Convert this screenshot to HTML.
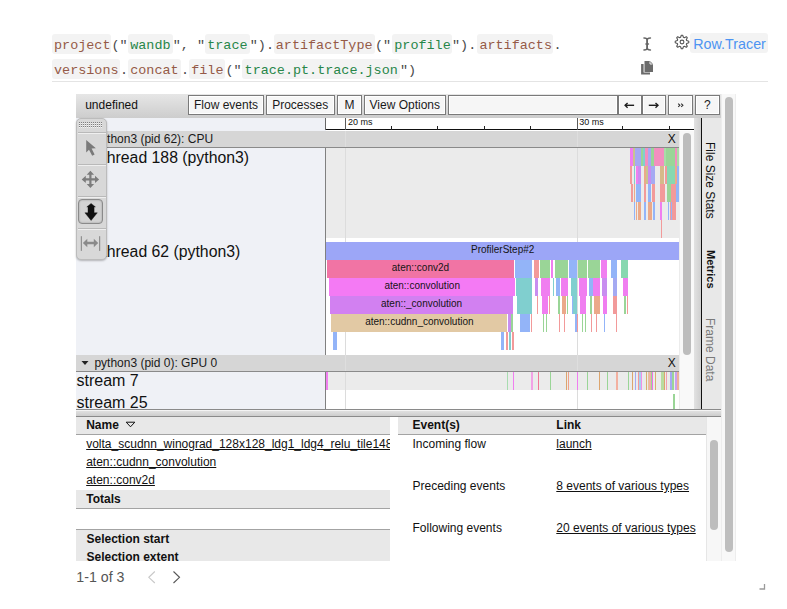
<!DOCTYPE html><html><head><meta charset="utf-8"><style>
*{box-sizing:border-box;margin:0;padding:0}
html,body{width:787px;height:609px;overflow:hidden;background:#fff;position:relative;font-family:"Liberation Sans",sans-serif}
div{position:absolute}
.bx{background:#f3f3f3;border-radius:3px}
.tk{font-family:"Liberation Mono",monospace;font-size:13.45px;line-height:20px;white-space:pre}
.id{color:#955a47}
.st{color:#278649}
.pu{color:#4a4a4a}
.btn{top:95px;height:20px;border:1px solid #7a7a7a;background:#f6f6f6;box-shadow:inset 0 0 0 1px #fff;font-size:12px;line-height:18px;text-align:center;color:#1a1a1a}
.t{white-space:pre}
.s12{font-size:12px;line-height:14px}
.s16{font-size:16px;line-height:18px;color:#111}
.lab{font-size:10px;line-height:12px;color:#141414;white-space:pre;text-align:center;overflow:hidden}
.lnk{text-decoration:underline;color:#111}
</style></head><body>
<div style="left:52px;top:34px;width:59.3px;height:19.5px;background:#f3f3f3;border-radius:3px"></div>
<div style="left:128px;top:34px;width:44.7px;height:19.5px;background:#f3f3f3;border-radius:3px"></div>
<div style="left:205px;top:34px;width:44.7px;height:19.5px;background:#f3f3f3;border-radius:3px"></div>
<div style="left:273.6px;top:34px;width:101.2px;height:19.5px;background:#f3f3f3;border-radius:3px"></div>
<div style="left:392.1px;top:34px;width:59.7px;height:19.5px;background:#f3f3f3;border-radius:3px"></div>
<div style="left:477.2px;top:34px;width:76.2px;height:19.5px;background:#f3f3f3;border-radius:3px"></div>
<div style="left:52px;top:59px;width:67.9px;height:19.5px;background:#f3f3f3;border-radius:3px"></div>
<div style="left:128px;top:59px;width:52.9px;height:19.5px;background:#f3f3f3;border-radius:3px"></div>
<div style="left:189px;top:59px;width:36.4px;height:19.5px;background:#f3f3f3;border-radius:3px"></div>
<div style="left:242.4px;top:59px;width:157.5px;height:19.5px;background:#f3f3f3;border-radius:3px"></div>
<div class="tk id" style="left:54px;top:35.5px">project</div>
<div class="tk pu" style="left:111.5px;top:35.5px">("</div>
<div class="tk st" style="left:130.2px;top:35.5px">wandb</div>
<div class="tk pu" style="left:172.8px;top:35.5px">", "</div>
<div class="tk st" style="left:207.2px;top:35.5px">trace</div>
<div class="tk pu" style="left:249.8px;top:35.5px">").</div>
<div class="tk id" style="left:275.8px;top:35.5px">artifactType</div>
<div class="tk pu" style="left:375px;top:35.5px">("</div>
<div class="tk st" style="left:394.3px;top:35.5px">profile</div>
<div class="tk pu" style="left:452px;top:35.5px">").</div>
<div class="tk id" style="left:479.4px;top:35.5px">artifacts</div>
<div class="tk pu" style="left:553.5px;top:35.5px">.</div>
<div class="tk id" style="left:54px;top:60.5px">versions</div>
<div class="tk pu" style="left:120px;top:60.5px">.</div>
<div class="tk id" style="left:130.2px;top:60.5px">concat</div>
<div class="tk pu" style="left:181px;top:60.5px">.</div>
<div class="tk id" style="left:191.2px;top:60.5px">file</div>
<div class="tk pu" style="left:225.5px;top:60.5px">("</div>
<div class="tk st" style="left:244.6px;top:60.5px">trace.pt.trace.json</div>
<div class="tk pu" style="left:400px;top:60.5px">")</div>
<div style="left:52px;top:81px;width:716px;height:1px;background:#e4e4e4;"></div>
<svg style="position:absolute;left:640px;top:34px" width="16" height="20" viewBox="0 0 16 20">
<g fill="none" stroke="#666" stroke-width="1.6" stroke-linecap="round">
<path d="M4 4 Q7.2 4 7.2 6 L7.2 14 Q7.2 16 4 16"/><path d="M10.4 4 Q7.2 4 7.2 6 L7.2 14 Q7.2 16 10.4 16"/>
<path d="M6 10 L8.4 10"/></g></svg>
<svg style="position:absolute;left:640px;top:60px" width="14" height="16" viewBox="0 0 14 16">
<path d="M1.1 4 H3.6 V12.4 H10 V14.6 H1.1 Z" fill="#6b6b6b"/>
<path d="M4.5 1 H10 L13 4 V12 H4.5 Z" fill="#6b6b6b"/><path d="M10 1.4 V4 H12.6" fill="none" stroke="#fff" stroke-width="0.9"/>
</svg>
<svg style="position:absolute;left:666px;top:26px" width="32" height="32" viewBox="0 0 32 32">
<polygon points="15.33,9.23 16.67,9.23 17.42,11.31 18.31,11.68 20.31,10.74 21.26,11.69 20.32,13.69 20.69,14.58 22.77,15.33 22.77,16.67 20.69,17.42 20.32,18.31 21.26,20.31 20.31,21.26 18.31,20.32 17.42,20.69 16.67,22.77 15.33,22.77 14.58,20.69 13.69,20.32 11.69,21.26 10.74,20.31 11.68,18.31 11.31,17.42 9.23,16.67 9.23,15.33 11.31,14.58 11.68,13.69 10.74,11.69 11.69,10.74 13.69,11.68 14.58,11.31" fill="#fff" stroke="#555" stroke-width="1.1" stroke-linejoin="round"/>
<circle cx="16" cy="16" r="1.9" fill="none" stroke="#555" stroke-width="1.1"/></svg>
<div style="left:690px;top:33px;width:77.6px;height:19.6px;background:#f3f3f3;border-radius:3px"></div>
<div class="t " style="left:693.3px;top:36px;font-size:14.3px;line-height:16px;color:#4d94f2">Row.Tracer</div>
<div style="left:721px;top:94px;width:15px;height:467px;background:#f8f8f8;border-left:1px solid #ededed;border-right:1px solid #ededed"></div>
<div style="left:725px;top:97px;width:8px;height:454.5px;background:#bebebe;border-radius:4px"></div>
<div style="left:76px;top:94px;width:645px;height:23.6px;background:linear-gradient(#e6e6e6,#cdcdcd);"></div>
<div class="t " style="left:85.2px;top:98px;font-size:12px;line-height:14px;color:#111">undefined</div>
<div class="btn" style="left:188px;width:76px">Flow events</div>
<div class="btn" style="left:265.6px;width:69.1px">Processes</div>
<div class="btn" style="left:337.4px;width:24.3px">M</div>
<div class="btn" style="left:363.8px;width:81.9px">View Options</div>
<div class="btn" style="left:448.1px;width:169.7px"></div>
<div class="btn" style="left:617.6px;width:24.0px"></div>
<div class="btn" style="left:641.6px;width:24.1px"></div>
<div class="btn" style="left:668.2px;width:24.7px"></div>
<div class="btn" style="left:695.2px;width:24.5px">?</div>
<svg style="position:absolute;left:618px;top:95px" width="77" height="20" viewBox="0 0 77 20"><g fill="none" stroke="#1e1e1e" stroke-width="1.4" stroke-linecap="butt" stroke-linejoin="miter">
<path d="M7 10.3 L16.1 10.3"/><path d="M9.6 7.9 L7.1 10.3 L9.6 12.7"/>
<path d="M30.8 10.3 L40 10.3"/><path d="M37.5 7.9 L40 10.3 L37.5 12.7"/>
</g><g fill="none" stroke="#333" stroke-width="1.1"><path d="M60.2 8.7 L61.9 10.3 L60.2 11.9"/><path d="M63.2 8.7 L64.9 10.3 L63.2 11.9"/></g></svg>
<div style="left:76px;top:117.6px;width:249.5px;height:291.4px;background:#eff1f6;"></div>
<div style="left:325.5px;top:117.6px;width:368.5px;height:12.9px;background:#fff;"></div>
<div style="left:325px;top:117.6px;width:1px;height:12.9px;background:#666;"></div>
<div style="left:325.5px;top:129px;width:368.5px;height:1.2px;background:#111;"></div>
<div style="left:391.0px;top:126px;width:1.0px;height:3.5px;background:#222;"></div>
<div style="left:437.2px;top:126px;width:1.0px;height:3.5px;background:#222;"></div>
<div style="left:483.6px;top:126px;width:1.0px;height:3.5px;background:#222;"></div>
<div style="left:529.9px;top:126px;width:1.0px;height:3.5px;background:#222;"></div>
<div style="left:622.3px;top:126px;width:1.0px;height:3.5px;background:#222;"></div>
<div style="left:668.8px;top:126px;width:1.0px;height:3.5px;background:#222;"></div>
<div style="left:344.85px;top:118px;width:1.5px;height:11.5px;background:#5a5a5a;"></div>
<div style="left:576.65px;top:118px;width:1.5px;height:11.5px;background:#5a5a5a;"></div>
<div class="t " style="left:348px;top:117px;font-size:9px;line-height:10px;color:#111">20 ms</div>
<div class="t " style="left:579.2px;top:117px;font-size:9px;line-height:10px;color:#111">30 ms</div>
<div style="left:76px;top:131px;width:603.2px;height:17px;background:#d6d6d6;border-bottom:1px solid #8a8a8a"></div>
<div style="left:344.85px;top:131px;width:1.5px;height:16px;background:#dedede;"></div>
<div style="left:576.65px;top:131px;width:1.5px;height:16px;background:#dedede;"></div>
<div class="t " style="left:94.4px;top:132px;font-size:12px;line-height:14px;color:#1a1a1a">python3 (pid 62): CPU</div>
<div class="t " style="left:667.8px;top:132px;font-size:12px;line-height:14px;color:#111">X</div>
<div style="left:325.5px;top:148px;width:353.7px;height:90px;background:#ebebeb;"></div>
<div style="left:325.5px;top:238px;width:353.7px;height:117px;background:#fff;"></div>
<div style="left:325px;top:148px;width:1px;height:207px;background:#808080;"></div>
<div style="left:344.85px;top:148px;width:1.5px;height:207px;background:#dcdcdc;"></div>
<div style="left:576.65px;top:148px;width:1.5px;height:207px;background:#dcdcdc;"></div>
<div class="t " style="left:102.4px;top:149px;font-size:15.8px;line-height:17px;color:#111">thread 188 (python3)</div>
<div class="t " style="left:102.4px;top:243px;font-size:15.8px;line-height:17px;color:#111">thread 62 (python3)</div>
<div style="left:76px;top:355px;width:603.2px;height:17px;background:#d6d6d6;border-bottom:1px solid #8a8a8a"></div>
<div style="left:344.85px;top:355px;width:1.5px;height:16px;background:#dedede;"></div>
<div style="left:576.65px;top:355px;width:1.5px;height:16px;background:#dedede;"></div>
<div class="t " style="left:94.4px;top:356px;font-size:12px;line-height:14px;color:#1a1a1a">python3 (pid 0): GPU 0</div>
<svg style="position:absolute;left:81px;top:360px" width="8" height="6" viewBox="0 0 8 6"><path d="M0.5 1 L7.5 1 L4 5 Z" fill="#222"/></svg>
<div class="t " style="left:667.8px;top:356px;font-size:12px;line-height:14px;color:#111">X</div>
<div style="left:325.5px;top:372px;width:353.7px;height:17.7px;background:#ebebeb;"></div>
<div style="left:325.5px;top:389.7px;width:353.7px;height:19.3px;background:#fff;"></div>
<div style="left:325px;top:372px;width:1px;height:37px;background:#808080;"></div>
<div style="left:344.85px;top:372px;width:1.5px;height:37px;background:#dcdcdc;"></div>
<div style="left:576.65px;top:372px;width:1.5px;height:37px;background:#dcdcdc;"></div>
<div class="t " style="left:76.5px;top:372px;font-size:16px;line-height:17px;color:#111">stream 7</div>
<div class="t " style="left:76.5px;top:394px;font-size:16px;line-height:17px;color:#111">stream 25</div>
<div style="left:679.2px;top:131px;width:14.8px;height:278px;background:#f9f9f9;border-left:1px solid #ececec"></div>
<div style="left:683.3px;top:132.8px;width:7.6px;height:222.5px;background:#bdbdbd;border-radius:4px"></div>
<div style="left:694px;top:117.6px;width:7px;height:291.4px;background:linear-gradient(90deg,#e2e2e2,#cfcfcf);"></div>
<div style="left:701px;top:117.6px;width:1.3px;height:291.4px;background:#111;"></div>
<div style="left:702.3px;top:117.6px;width:18.7px;height:291.4px;background:#e8e8e8;"></div>
<div class="t" style="left:703px;top:142.4px;font-size:12px;line-height:14px;color:#111;transform-origin:0 0;transform:translate(14px,0) rotate(90deg)">File Size Stats</div>
<div class="t" style="left:703.5px;top:249.6px;font-size:11px;line-height:14px;font-weight:bold;color:#111;transform-origin:0 0;transform:translate(14px,0) rotate(90deg)">Metrics</div>
<div class="t" style="left:703px;top:317.6px;font-size:12px;line-height:14px;color:#7a7a7a;transform-origin:0 0;transform:translate(14px,0) rotate(90deg)">Frame Data</div>
<div style="left:76.3px;top:118px;width:30.3px;height:142px;background:#d8d8d8;border:1px solid #bcbcbc;border-radius:5px;box-shadow:0 1px 2px rgba(0,0,0,.25)"></div>
<svg style="position:absolute;left:79px;top:122px" width="24" height="6" viewBox="0 0 24 6"><rect x="0" y="0" width="1" height="1" fill="#7e7e7e"/><rect x="0" y="1" width="1" height="1" fill="#f2f2f2"/><rect x="0" y="2" width="1" height="1" fill="#7e7e7e"/><rect x="0" y="3" width="1" height="1" fill="#f2f2f2"/><rect x="0" y="4" width="1" height="1" fill="#7e7e7e"/><rect x="0" y="5" width="1" height="1" fill="#f2f2f2"/><rect x="2" y="0" width="1" height="1" fill="#7e7e7e"/><rect x="2" y="1" width="1" height="1" fill="#f2f2f2"/><rect x="2" y="2" width="1" height="1" fill="#7e7e7e"/><rect x="2" y="3" width="1" height="1" fill="#f2f2f2"/><rect x="2" y="4" width="1" height="1" fill="#7e7e7e"/><rect x="2" y="5" width="1" height="1" fill="#f2f2f2"/><rect x="4" y="0" width="1" height="1" fill="#7e7e7e"/><rect x="4" y="1" width="1" height="1" fill="#f2f2f2"/><rect x="4" y="2" width="1" height="1" fill="#7e7e7e"/><rect x="4" y="3" width="1" height="1" fill="#f2f2f2"/><rect x="4" y="4" width="1" height="1" fill="#7e7e7e"/><rect x="4" y="5" width="1" height="1" fill="#f2f2f2"/><rect x="6" y="0" width="1" height="1" fill="#7e7e7e"/><rect x="6" y="1" width="1" height="1" fill="#f2f2f2"/><rect x="6" y="2" width="1" height="1" fill="#7e7e7e"/><rect x="6" y="3" width="1" height="1" fill="#f2f2f2"/><rect x="6" y="4" width="1" height="1" fill="#7e7e7e"/><rect x="6" y="5" width="1" height="1" fill="#f2f2f2"/><rect x="8" y="0" width="1" height="1" fill="#7e7e7e"/><rect x="8" y="1" width="1" height="1" fill="#f2f2f2"/><rect x="8" y="2" width="1" height="1" fill="#7e7e7e"/><rect x="8" y="3" width="1" height="1" fill="#f2f2f2"/><rect x="8" y="4" width="1" height="1" fill="#7e7e7e"/><rect x="8" y="5" width="1" height="1" fill="#f2f2f2"/><rect x="10" y="0" width="1" height="1" fill="#7e7e7e"/><rect x="10" y="1" width="1" height="1" fill="#f2f2f2"/><rect x="10" y="2" width="1" height="1" fill="#7e7e7e"/><rect x="10" y="3" width="1" height="1" fill="#f2f2f2"/><rect x="10" y="4" width="1" height="1" fill="#7e7e7e"/><rect x="10" y="5" width="1" height="1" fill="#f2f2f2"/><rect x="12" y="0" width="1" height="1" fill="#7e7e7e"/><rect x="12" y="1" width="1" height="1" fill="#f2f2f2"/><rect x="12" y="2" width="1" height="1" fill="#7e7e7e"/><rect x="12" y="3" width="1" height="1" fill="#f2f2f2"/><rect x="12" y="4" width="1" height="1" fill="#7e7e7e"/><rect x="12" y="5" width="1" height="1" fill="#f2f2f2"/><rect x="14" y="0" width="1" height="1" fill="#7e7e7e"/><rect x="14" y="1" width="1" height="1" fill="#f2f2f2"/><rect x="14" y="2" width="1" height="1" fill="#7e7e7e"/><rect x="14" y="3" width="1" height="1" fill="#f2f2f2"/><rect x="14" y="4" width="1" height="1" fill="#7e7e7e"/><rect x="14" y="5" width="1" height="1" fill="#f2f2f2"/><rect x="16" y="0" width="1" height="1" fill="#7e7e7e"/><rect x="16" y="1" width="1" height="1" fill="#f2f2f2"/><rect x="16" y="2" width="1" height="1" fill="#7e7e7e"/><rect x="16" y="3" width="1" height="1" fill="#f2f2f2"/><rect x="16" y="4" width="1" height="1" fill="#7e7e7e"/><rect x="16" y="5" width="1" height="1" fill="#f2f2f2"/><rect x="18" y="0" width="1" height="1" fill="#7e7e7e"/><rect x="18" y="1" width="1" height="1" fill="#f2f2f2"/><rect x="18" y="2" width="1" height="1" fill="#7e7e7e"/><rect x="18" y="3" width="1" height="1" fill="#f2f2f2"/><rect x="18" y="4" width="1" height="1" fill="#7e7e7e"/><rect x="18" y="5" width="1" height="1" fill="#f2f2f2"/><rect x="20" y="0" width="1" height="1" fill="#7e7e7e"/><rect x="20" y="1" width="1" height="1" fill="#f2f2f2"/><rect x="20" y="2" width="1" height="1" fill="#7e7e7e"/><rect x="20" y="3" width="1" height="1" fill="#f2f2f2"/><rect x="20" y="4" width="1" height="1" fill="#7e7e7e"/><rect x="20" y="5" width="1" height="1" fill="#f2f2f2"/><rect x="22" y="0" width="1" height="1" fill="#7e7e7e"/><rect x="22" y="1" width="1" height="1" fill="#f2f2f2"/><rect x="22" y="2" width="1" height="1" fill="#7e7e7e"/><rect x="22" y="3" width="1" height="1" fill="#f2f2f2"/><rect x="22" y="4" width="1" height="1" fill="#7e7e7e"/><rect x="22" y="5" width="1" height="1" fill="#f2f2f2"/></svg>
<div style="left:77.5px;top:132px;width:28.0px;height:1px;background:#b9b9b9;box-shadow:0 1px 0 #efefef"></div>
<div style="left:77.5px;top:164px;width:28.0px;height:1px;background:#b9b9b9;box-shadow:0 1px 0 #efefef"></div>
<div style="left:77.5px;top:196px;width:28.0px;height:1px;background:#b9b9b9;box-shadow:0 1px 0 #efefef"></div>
<div style="left:77.5px;top:228px;width:28.0px;height:1px;background:#b9b9b9;box-shadow:0 1px 0 #efefef"></div>
<svg style="position:absolute;left:84px;top:139px" width="14" height="18" viewBox="0 0 14 18"><path d="M2.2 1 L2.2 13.6 L5 10.8 L8.2 16.8 L10.6 15.6 L7.6 9.6 L11.9 9.2 Z" fill="#7a7a7a"/></svg>
<svg style="position:absolute;left:80px;top:169px" width="21" height="21" viewBox="0 0 21 21"><path fill="#7c7c7c" d="M10.4 1.7 L14.1 5.8 L11.5 5.8 L11.5 9.3 L15 9.3 L15 6.7 L19.1 10.4 L15 14.1 L15 11.5 L11.5 11.5 L11.5 15 L14.1 15 L10.4 19.1 L6.7 15 L9.3 15 L9.3 11.5 L5.8 11.5 L5.8 14.1 L1.7 10.4 L5.8 6.7 L5.8 9.3 L9.3 9.3 L9.3 5.8 L6.7 5.8 Z"/></svg>
<div style="left:78.2px;top:199px;width:24.8px;height:24.5px;background:#d3d3d3;border:1px solid #8a8a8a;border-radius:4px;box-shadow:inset 0 0 2px rgba(0,0,0,.3)"></div>
<svg style="position:absolute;left:76px;top:196px" width="30" height="30" viewBox="0 0 30 30"><path d="M15.1 7.4 L19.4 10.9 L18.1 10.9 L18.1 16.8 L21.3 16.8 L15.1 24.5 L8.9 16.8 L12 16.8 L12 10.9 L10.8 10.9 Z" fill="#111" stroke="#111" stroke-width="0.4" stroke-linejoin="round"/></svg>
<svg style="position:absolute;left:80px;top:234px" width="22" height="19" viewBox="0 0 22 19"><g fill="#8a8a8a">
<rect x="0.8" y="2.2" width="1.1" height="14.7"/><rect x="19.1" y="2.2" width="1.1" height="14.7"/>
<path d="M2.9 9.05 L7.3 4.8 L7.3 7.75 L13.8 7.75 L13.8 4.8 L18.2 9.05 L13.8 13.3 L13.8 10.35 L7.3 10.35 L7.3 13.3 Z"/></g></svg>
<div style="left:76px;top:409px;width:645px;height:8px;background:linear-gradient(#e4e4e4,#cdcdcd);border-top:1px solid #8a8a8a;border-bottom:1px solid #8a8a8a;box-shadow:inset 0 1px 0 #f4f4f4"></div>
<div style="left:76px;top:417px;width:630.3px;height:144px;background:#fff;"></div>
<div style="left:76px;top:417px;width:314.2px;height:18px;background:#e8e8e8;border-bottom:1px solid #a3a3a3"></div>
<div class="t " style="left:86.2px;top:418px;font-size:12px;line-height:14px;color:#111"><b>Name</b></div>
<svg style="position:absolute;left:125px;top:421px" width="11" height="7" viewBox="0 0 11 7"><path d="M1.2 1.2 L9.8 1.2 L5.5 5.8 Z" fill="none" stroke="#111" stroke-width="1"/></svg>
<div style="left:76px;top:434px;width:314.2px;height:20px;overflow:hidden">
<div class="t " style="left:10.2px;top:3px;font-size:12px;line-height:14px;"><span class="lnk">volta_scudnn_winograd_128x128_ldg1_ldg4_relu_tile148n_nt_v1</span></div>
</div>
<div class="t " style="left:86.2px;top:455px;font-size:12px;line-height:14px;"><span class="lnk">aten::cudnn_convolution</span></div>
<div class="t " style="left:86.2px;top:473px;font-size:12px;line-height:14px;"><span class="lnk">aten::conv2d</span></div>
<div style="left:76px;top:490px;width:314.2px;height:18.5px;background:#e8e8e8;border-bottom:1px solid #a3a3a3"></div>
<div class="t " style="left:86.2px;top:492px;font-size:12px;line-height:14px;color:#111"><b>Totals</b></div>
<div style="left:76px;top:529.2px;width:314.2px;height:31.8px;background:#e8e8e8;border-top:1px solid #a3a3a3"></div>
<div class="t " style="left:86.5px;top:532px;font-size:12px;line-height:14px;color:#111"><b>Selection start</b></div>
<div style="left:76px;top:545px;width:314.2px;height:16px;overflow:hidden">
<div class="t " style="left:10.5px;top:5px;font-size:12px;line-height:14px;color:#111"><b>Selection extent</b></div>
</div>
<div style="left:398px;top:417px;width:308.3px;height:18px;background:#e8e8e8;border-bottom:1px solid #a3a3a3"></div>
<div class="t " style="left:412.5px;top:418px;font-size:12px;line-height:14px;color:#111"><b>Event(s)</b></div>
<div class="t " style="left:556.3px;top:418px;font-size:12px;line-height:14px;color:#111"><b>Link</b></div>
<div class="t " style="left:412.5px;top:437px;font-size:12px;line-height:14px;color:#111">Incoming flow</div>
<div class="t " style="left:556.3px;top:437px;font-size:12px;line-height:14px;"><span class="lnk">launch</span></div>
<div class="t " style="left:412.5px;top:479px;font-size:12px;line-height:14px;color:#111">Preceding events</div>
<div class="t " style="left:556.3px;top:479px;font-size:12px;line-height:14px;"><span class="lnk">8 events of various types</span></div>
<div class="t " style="left:412.5px;top:521px;font-size:12px;line-height:14px;color:#111">Following events</div>
<div class="t " style="left:556.3px;top:521px;font-size:12px;line-height:14px;"><span class="lnk">20 events of various types</span></div>
<div style="left:706.3px;top:417px;width:14.5px;height:144px;background:#f7f7f7;border-left:1px solid #e6e6e6"></div>
<div style="left:710.1px;top:439.6px;width:8.0px;height:90.2px;background:#bdbdbd;border-radius:4px"></div>
<div class="t " style="left:76.3px;top:569px;font-size:14.2px;line-height:16px;color:#555">1-1 of 3</div>
<svg style="position:absolute;left:146px;top:570px" width="40" height="15" viewBox="0 0 40 15"><path d="M8.8 1.5 L2.8 7.3 L8.8 13" fill="none" stroke="#c8c8c8" stroke-width="1.1"/><path d="M27.5 1.5 L33.5 7.3 L27.5 13" fill="none" stroke="#555" stroke-width="1.1"/></svg>
<svg style="position:absolute;left:758px;top:583px" width="8" height="8" viewBox="0 0 8 8"><path d="M1.5 6 L6.5 6 L6.5 1" fill="none" stroke="#9a9a9a" stroke-width="1.3"/></svg>
<div style="left:326.2px;top:242.2px;width:353.0px;height:17.8px;background:#9ca6f7"></div>
<div class="lab" style="left:326.2px;top:244.2px;width:353.0px">ProfilerStep#2</div>
<div style="left:327.3px;top:260.0px;width:186.3px;height:17.9px;background:#f174a4"></div>
<div style="left:515.1px;top:260.0px;width:17.0px;height:17.9px;background:#93b4f8"></div>
<div style="left:533.6px;top:260.0px;width:5.1px;height:17.9px;background:#f29a9a"></div>
<div style="left:540px;top:260.0px;width:10px;height:17.9px;background:#9ad597"></div>
<div style="left:551px;top:260.0px;width:2.4px;height:17.9px;background:#f07ef0"></div>
<div style="left:554.7px;top:260.0px;width:13.6px;height:17.9px;background:#9ad597"></div>
<div style="left:569.4px;top:260.0px;width:7.6px;height:17.9px;background:#93b4f8"></div>
<div style="left:577.9px;top:260.0px;width:9.1px;height:17.9px;background:#9ad597"></div>
<div style="left:587.9px;top:260.0px;width:11.9px;height:17.9px;background:#9ad597"></div>
<div style="left:600.6px;top:260.0px;width:6.8px;height:17.9px;background:#f07ef0"></div>
<div style="left:611.1px;top:260.0px;width:5.7px;height:17.9px;background:#93b4f8"></div>
<div style="left:621px;top:260.0px;width:6.9px;height:17.9px;background:#88d8b0"></div>
<div class="lab" style="left:327.3px;top:262.0px;width:186.3px">aten::conv2d</div>
<div style="left:328.9px;top:277.9px;width:186.6px;height:17.9px;background:#f47af4"></div>
<div style="left:516px;top:277.9px;width:16px;height:17.9px;background:#80cfcf"></div>
<div style="left:535px;top:277.9px;width:2.7px;height:17.9px;background:#c88ef0"></div>
<div style="left:541.1px;top:277.9px;width:8.9px;height:17.9px;background:#f07ef0"></div>
<div style="left:552.5px;top:277.9px;width:1.0px;height:17.9px;background:#80cfcf"></div>
<div style="left:556.2px;top:277.9px;width:3.8px;height:17.9px;background:#93b4f8"></div>
<div style="left:560.8px;top:277.9px;width:7.2px;height:17.9px;background:#f07ef0"></div>
<div style="left:570.8px;top:277.9px;width:6.2px;height:17.9px;background:#80cfcf"></div>
<div style="left:579px;top:277.9px;width:8px;height:17.9px;background:#f07ef0"></div>
<div style="left:588.9px;top:277.9px;width:3.7px;height:17.9px;background:#93b4f8"></div>
<div style="left:592.6px;top:277.9px;width:7.2px;height:17.9px;background:#f07ef0"></div>
<div style="left:602px;top:277.9px;width:5.4px;height:17.9px;background:#c88ef0"></div>
<div style="left:612.5px;top:277.9px;width:4.3px;height:17.9px;background:#a5aaf2"></div>
<div style="left:622.8px;top:277.9px;width:5.1px;height:17.9px;background:#f07ef0"></div>
<div class="lab" style="left:328.9px;top:279.9px;width:186.6px">aten::convolution</div>
<div style="left:330px;top:295.8px;width:183.2px;height:17.9px;background:#d280f1"></div>
<div style="left:517.4px;top:295.8px;width:14.6px;height:17.9px;background:#80cfcf"></div>
<div style="left:536.5px;top:295.8px;width:1.5px;height:17.9px;background:#f29a9a"></div>
<div style="left:541.9px;top:295.8px;width:6.2px;height:17.9px;background:#f07ef0"></div>
<div style="left:548.5px;top:295.8px;width:1.0px;height:17.9px;background:#f29a9a"></div>
<div style="left:557.5px;top:295.8px;width:2.5px;height:17.9px;background:#9ad597"></div>
<div style="left:562.3px;top:295.8px;width:3.7px;height:17.9px;background:#eba98a"></div>
<div style="left:566.5px;top:295.8px;width:1.0px;height:17.9px;background:#9ad597"></div>
<div style="left:571.5px;top:295.8px;width:1.5px;height:17.9px;background:#93b4f8"></div>
<div style="left:573px;top:295.8px;width:4px;height:17.9px;background:#80cfcf"></div>
<div style="left:580.4px;top:295.8px;width:5.6px;height:17.9px;background:#f07ef0"></div>
<div style="left:589.8px;top:295.8px;width:2.2px;height:17.9px;background:#9ad597"></div>
<div style="left:594.2px;top:295.8px;width:5.6px;height:17.9px;background:#eba98a"></div>
<div style="left:603px;top:295.8px;width:3.8px;height:17.9px;background:#f07ef0"></div>
<div style="left:613.4px;top:295.8px;width:3.4px;height:17.9px;background:#f29a9a"></div>
<div style="left:623.8px;top:295.8px;width:2.2px;height:17.9px;background:#9ad597"></div>
<div style="left:626.5px;top:295.8px;width:1.0px;height:17.9px;background:#f29a9a"></div>
<div class="lab" style="left:330px;top:297.8px;width:183.2px">aten::_convolution</div>
<div style="left:331.2px;top:313.7px;width:176.3px;height:17.9px;background:#e2c9a4"></div>
<div style="left:507.5px;top:313.7px;width:3.3px;height:17.9px;background:#c88ef0"></div>
<div style="left:511.3px;top:313.7px;width:1.9px;height:17.9px;background:#9ad597"></div>
<div style="left:519.8px;top:313.7px;width:10.4px;height:17.9px;background:#93b4f8"></div>
<div style="left:530.5px;top:313.7px;width:1.0px;height:17.9px;background:#f29a9a"></div>
<div style="left:543px;top:313.7px;width:1px;height:17.9px;background:#9ad597"></div>
<div style="left:546px;top:313.7px;width:1px;height:17.9px;background:#9ad597"></div>
<div style="left:558.5px;top:313.7px;width:1.0px;height:17.9px;background:#f29a9a"></div>
<div style="left:563.5px;top:313.7px;width:1.0px;height:17.9px;background:#f29a9a"></div>
<div style="left:574.5px;top:313.7px;width:1.0px;height:17.9px;background:#f29a9a"></div>
<div style="left:575.3px;top:313.7px;width:1.7px;height:17.9px;background:#93b4f8"></div>
<div style="left:577px;top:313.7px;width:1px;height:17.9px;background:#f29a9a"></div>
<div style="left:581.5px;top:313.7px;width:1.0px;height:17.9px;background:#9ad597"></div>
<div style="left:584.5px;top:313.7px;width:1.0px;height:17.9px;background:#9ad597"></div>
<div style="left:591px;top:313.7px;width:1px;height:17.9px;background:#f29a9a"></div>
<div style="left:596px;top:313.7px;width:1px;height:17.9px;background:#f29a9a"></div>
<div style="left:604px;top:313.7px;width:1px;height:17.9px;background:#93b4f8"></div>
<div style="left:615.5px;top:313.7px;width:1.0px;height:17.9px;background:#f29a9a"></div>
<div class="lab" style="left:331.2px;top:315.7px;width:176.3px">aten::cudnn_convolution</div>
<div style="left:333px;top:331.6px;width:3.8px;height:18.0px;background:#93b4f8"></div>
<div style="left:500.8px;top:331.6px;width:3.4px;height:18.0px;background:#93b4f8"></div>
<div style="left:506px;top:331.6px;width:1.5px;height:18.0px;background:#f29a9a"></div>
<div style="left:508.9px;top:331.6px;width:1.7px;height:18.0px;background:#80cfcf"></div>
<div style="left:512.3px;top:331.6px;width:1.3px;height:18.0px;background:#f29a9a"></div>
<div style="left:630px;top:148.1px;width:2.8px;height:17.9px;background:#f07ef0"></div>
<div style="left:632.8px;top:148.1px;width:2.3px;height:17.9px;background:#c9c48f"></div>
<div style="left:635.1px;top:148.1px;width:5.5px;height:17.9px;background:#a5aaf2"></div>
<div style="left:640.6px;top:148.1px;width:2.4px;height:17.9px;background:#9ad597"></div>
<div style="left:643px;top:148.1px;width:2px;height:17.9px;background:#80cfcf"></div>
<div style="left:645px;top:148.1px;width:2.6px;height:17.9px;background:#f28fbf"></div>
<div style="left:647.6px;top:148.1px;width:3.1px;height:17.9px;background:#a5aaf2"></div>
<div style="left:650.7px;top:148.1px;width:3.2px;height:17.9px;background:#9ad597"></div>
<div style="left:653.9px;top:148.1px;width:10.1px;height:17.9px;background:#f28fbf"></div>
<div style="left:664px;top:148.1px;width:2.3px;height:17.9px;background:#a8dca8"></div>
<div style="left:666.3px;top:148.1px;width:8.7px;height:17.9px;background:#9ad597"></div>
<div style="left:675px;top:148.1px;width:1.8px;height:17.9px;background:#f28fbf"></div>
<div style="left:676.8px;top:148.1px;width:2.4px;height:17.9px;background:#a8dca8"></div>
<div style="left:630px;top:166px;width:2px;height:18px;background:#f29a9a"></div>
<div style="left:633.6px;top:166px;width:1.1px;height:18px;background:#80cfcf"></div>
<div style="left:635.9px;top:166px;width:2.4px;height:18px;background:#f07ef0"></div>
<div style="left:638.3px;top:166px;width:3.1px;height:18px;background:#c88ef0"></div>
<div style="left:643.7px;top:166px;width:2.3px;height:18px;background:#eba98a"></div>
<div style="left:646px;top:166px;width:2.4px;height:18px;background:#c9c48f"></div>
<div style="left:648.4px;top:166px;width:2.3px;height:18px;background:#c88ef0"></div>
<div style="left:650.7px;top:166px;width:3.9px;height:18px;background:#a5aaf2"></div>
<div style="left:659.6px;top:166px;width:4.4px;height:18px;background:#d6b98a"></div>
<div style="left:665.2px;top:166px;width:1.9px;height:18px;background:#f29a9a"></div>
<div style="left:667.1px;top:166px;width:7.9px;height:18px;background:#88d8b0"></div>
<div style="left:675px;top:166px;width:1.8px;height:18px;background:#eba98a"></div>
<div style="left:677.3px;top:166px;width:1.9px;height:18px;background:#93b4f8"></div>
<div style="left:631px;top:184px;width:1.8px;height:18px;background:#f29a9a"></div>
<div style="left:633.6px;top:184px;width:1.5px;height:18px;background:#eba98a"></div>
<div style="left:635.9px;top:184px;width:4.7px;height:18px;background:#93b4f8"></div>
<div style="left:643.7px;top:184px;width:2.3px;height:18px;background:#f29a9a"></div>
<div style="left:647.6px;top:184px;width:3.9px;height:18px;background:#93b4f8"></div>
<div style="left:652.3px;top:184px;width:3.1px;height:18px;background:#f29a9a"></div>
<div style="left:660.1px;top:184px;width:4.7px;height:18px;background:#f29a9a"></div>
<div style="left:666.8px;top:184px;width:4.2px;height:18px;background:#9ad597"></div>
<div style="left:671px;top:184px;width:4.7px;height:18px;background:#f29a9a"></div>
<div style="left:676.2px;top:184px;width:3.0px;height:18px;background:#93b4f8"></div>
<div style="left:633.9px;top:202px;width:1.2px;height:18px;background:#93b4f8"></div>
<div style="left:635.6px;top:202px;width:1.1px;height:18px;background:#eba98a"></div>
<div style="left:637.5px;top:202px;width:3.4px;height:18px;background:#eba98a"></div>
<div style="left:644px;top:202px;width:2px;height:18px;background:#93b4f8"></div>
<div style="left:648.1px;top:202px;width:3.7px;height:18px;background:#eba98a"></div>
<div style="left:652.8px;top:202px;width:1.8px;height:18px;background:#93b4f8"></div>
<div style="left:660.1px;top:202px;width:1.6px;height:18px;background:#f07ef0"></div>
<div style="left:667.9px;top:202px;width:1.6px;height:18px;background:#93b4f8"></div>
<div style="left:669.5px;top:202px;width:1.5px;height:18px;background:#f29a9a"></div>
<div style="left:671px;top:202px;width:1.1px;height:18px;background:#93b4f8"></div>
<div style="left:672.1px;top:202px;width:3.6px;height:18px;background:#f29a9a"></div>
<div style="left:660.9px;top:220px;width:0.9px;height:18px;background:#f29a9a"></div>
<div style="left:326px;top:372px;width:1.5px;height:17.7px;background:#f07ef0"></div>
<div style="left:506.7px;top:372px;width:1.6px;height:17.7px;background:#a8dcb0"></div>
<div style="left:513px;top:372px;width:1.2px;height:17.7px;background:#f07ef0"></div>
<div style="left:531.1px;top:372px;width:1.8px;height:17.7px;background:#f2a2e6"></div>
<div style="left:538px;top:372px;width:1px;height:17.7px;background:#f07898"></div>
<div style="left:549.9px;top:372px;width:1.2px;height:17.7px;background:#9ad597"></div>
<div style="left:565.9px;top:372px;width:1.2px;height:17.7px;background:#dca56e"></div>
<div style="left:567.7px;top:372px;width:1.4px;height:17.7px;background:#f0a088"></div>
<div style="left:576.8px;top:372px;width:1.3px;height:17.7px;background:#f07ef0"></div>
<div style="left:586.8px;top:372px;width:1.2px;height:17.7px;background:#9ad597"></div>
<div style="left:598.5px;top:372px;width:1.7px;height:17.7px;background:#dca56e"></div>
<div style="left:606.9px;top:372px;width:1.2px;height:17.7px;background:#9ad597"></div>
<div style="left:616px;top:372px;width:1.5px;height:17.7px;background:#f3b0a0"></div>
<div style="left:627.9px;top:372px;width:1.2px;height:17.7px;background:#9ad597"></div>
<div style="left:631.7px;top:372px;width:1.3px;height:17.7px;background:#dca56e"></div>
<div style="left:634.8px;top:372px;width:1.4px;height:17.7px;background:#a5aaf2"></div>
<div style="left:637.7px;top:372px;width:1.2px;height:17.7px;background:#f29a9a"></div>
<div style="left:639.1px;top:372px;width:1.8px;height:17.7px;background:#a8d0f0"></div>
<div style="left:640.9px;top:372px;width:1.6px;height:17.7px;background:#f090e8"></div>
<div style="left:646px;top:372px;width:1.2px;height:17.7px;background:#d8b070"></div>
<div style="left:647.6px;top:372px;width:1.2px;height:17.7px;background:#e6c49a"></div>
<div style="left:648.8px;top:372px;width:1.9px;height:17.7px;background:#f0b0a8"></div>
<div style="left:650.7px;top:372px;width:1.2px;height:17.7px;background:#9ad597"></div>
<div style="left:651.9px;top:372px;width:1.2px;height:17.7px;background:#f070e8"></div>
<div style="left:654.7px;top:372px;width:1.2px;height:17.7px;background:#d8b070"></div>
<div style="left:661px;top:372px;width:2.7px;height:17.7px;background:#b8dca0"></div>
<div style="left:663.7px;top:372px;width:1.2px;height:17.7px;background:#dca56e"></div>
<div style="left:666.1px;top:372px;width:1.0px;height:17.7px;background:#f2a0b0"></div>
<div style="left:670px;top:372px;width:2px;height:17.7px;background:#a5aaf2"></div>
<div style="left:672.4px;top:372px;width:2.0px;height:17.7px;background:#9ad597"></div>
<div style="left:674.8px;top:372px;width:1.9px;height:17.7px;background:#c8a0f0"></div>
<div style="left:676.7px;top:372px;width:2.5px;height:17.7px;background:#eeb098"></div>
<div style="left:673.2px;top:394.2px;width:1.5px;height:14.8px;background:#9ad597"></div>
</body></html>
